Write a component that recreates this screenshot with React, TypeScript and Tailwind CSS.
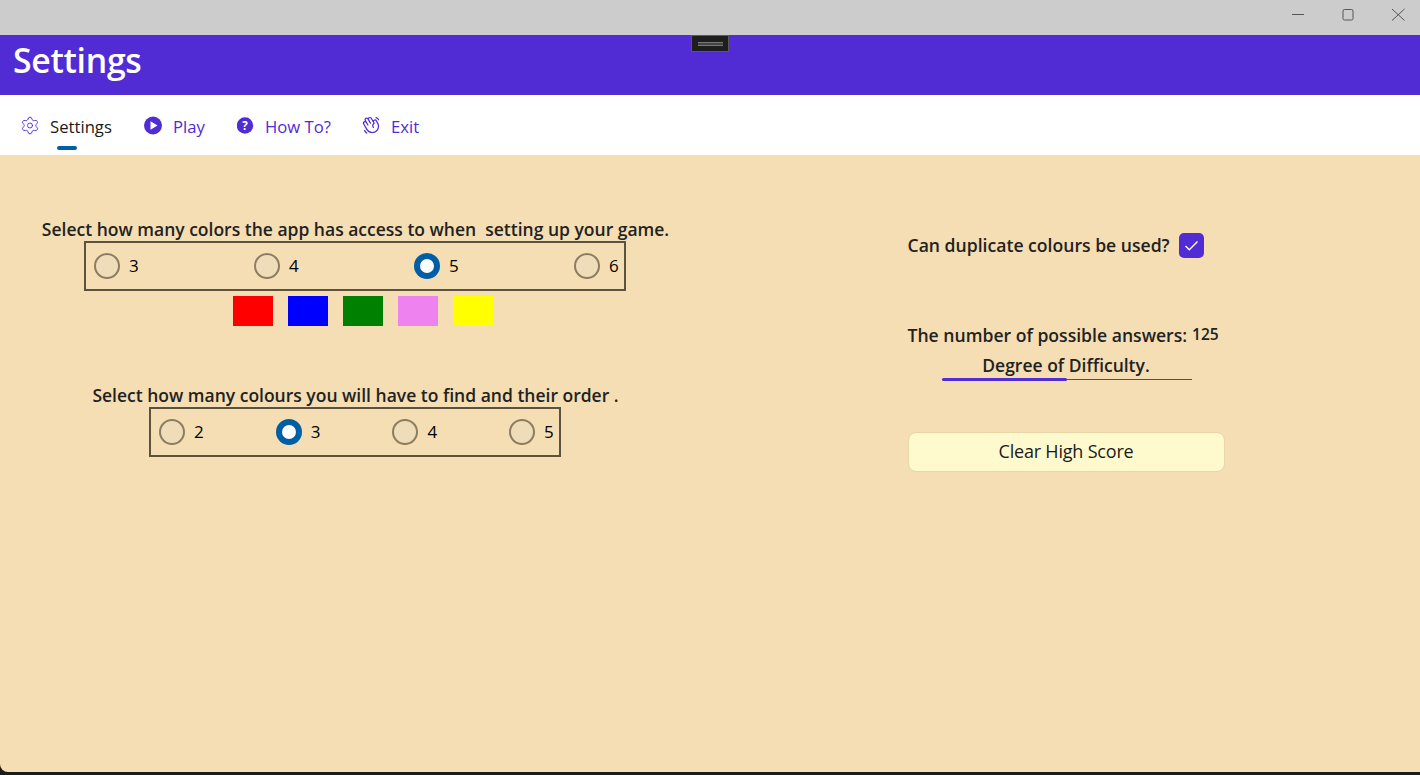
import { JSX } from 'react'
import { Settings } from 'lucide-react'
import { PiHandWaving } from 'react-icons/pi'

const font = "font-['Open_Sans',sans-serif]"

const Radio = ({ label, checked, className }: { label: string; checked?: boolean; className: string }): JSX.Element => (
  <div className={`flex items-center gap-[9px] ${className}`}>
    {checked ? (
      <span className="flex size-[26px] items-center justify-center rounded-full bg-[#005ea6]">
        <span className="size-[14px] rounded-full bg-white" />
      </span>
    ) : (
      <span className="size-[26px] rounded-full border-2 border-[#8b7d62] bg-[#efdcb8]" />
    )}
    <span className="text-[17px] leading-none text-black">{label}</span>
  </div>
)

const Heading = ({ children }: { children: string }): JSX.Element => (
  <p className="whitespace-pre pl-[1px] text-center text-[17.5px] font-semibold leading-[24px] text-[#222222]">{children}</p>
)

const NavItem = ({ icon, label, active, className }: { icon: JSX.Element; label: string; active?: boolean; className: string }): JSX.Element => (
  <div className={`relative flex h-[24px] items-center ${className}`}>
    <span className="flex size-[20px] items-center justify-center">{icon}</span>
    <span className={`ml-[10px] pt-[4px] text-[16.7px] leading-[20px] ${active ? 'text-[#1a1a1a]' : 'text-[#512bd4]'}`}>{label}</span>
    {active && <span className="absolute left-[37px] top-[33px] h-[4px] w-[20px] rounded-full bg-[#005ea6]" />}
  </div>
)

export default function App(): JSX.Element {
  return (
    <div className={`relative flex h-[775px] w-[1420px] flex-col overflow-hidden bg-[#1c1c1c] ${font}`}>
      <div className="flex h-[35px] shrink-0 justify-end bg-[#cccccc]">
        <div className="flex h-[29px] items-center">
          <svg width="140" height="29" viewBox="0 0 140 29" fill="none" stroke="#555555" strokeWidth="1">
            <path d="M12 14.5h12" />
            <rect x="63" y="9.5" width="10" height="10.5" rx="1.5" />
            <path d="M112 9l12.5 11.5M124.5 9L112 20.5" />
          </svg>
        </div>
      </div>

      <div className="flex h-[60px] shrink-0 items-center bg-[#512bd4] pl-[13px]">
        <h1 className="pb-[8px] text-[33.8px] font-semibold leading-none tracking-[-0.3px] text-white">Settings</h1>
      </div>

      <div className="absolute left-[691px] top-[35px] flex h-[17px] w-[38px] items-center justify-center border border-[#5a5a5a] bg-[#1e1e1e]">
        <span className="h-[4px] w-[25px] border-y border-[#777777] bg-[#444444]" />
      </div>

      <nav className="flex h-[60px] shrink-0 items-center bg-white pl-[20px]">
        <NavItem className="w-[123px]" active label="Settings" icon={<Settings size={21} strokeWidth={1.1} color="#512bd4" />} />
        <NavItem
          className="w-[92px]"
          label="Play"
          icon={
            <svg width="19" height="19" viewBox="0 0 19 19">
              <circle cx="9" cy="9.5" r="9" fill="#512bd4" />
              <path d="M6.5 5.2l7 4.3-7 4.3z" fill="white" />
            </svg>
          }
        />
        <NavItem
          className="w-[126px]"
          label="How To?"
          icon={
            <svg width="17" height="17" viewBox="0 0 17 17">
              <circle cx="8" cy="8.5" r="8.2" fill="#512bd4" />
              <text x="8" y="12.6" textAnchor="middle" fontSize="11.5" fontWeight="700" fill="white" fontFamily="Open Sans, sans-serif">?</text>
            </svg>
          }
        />
        <NavItem className="w-[70px]" label="Exit" icon={<PiHandWaving size={20} color="#512bd4" />} />
      </nav>

      <main className="mb-[3px] grid min-h-0 flex-1 grid-cols-2 rounded-bl-[8px] bg-[#f5deb3]">
        <section className="flex flex-col items-center pt-[62px]">
          <Heading>{'Select how many colors the app has access to when  setting up your game.'}</Heading>
          <div className="flex h-[50px] w-[542px] items-center border-2 border-[#5c5240] pb-[1px] pl-[8px]">
            <Radio label="3" className="w-[160px]" />
            <Radio label="4" className="w-[160px]" />
            <Radio label="5" checked className="w-[160px]" />
            <Radio label="6" className="w-[50px]" />
          </div>
          <div className="ml-[16px] mt-[5px] flex gap-[15px]">
            <span className="h-[30px] w-[40px] bg-[#ff0000]" />
            <span className="h-[30px] w-[40px] bg-[#0000ff]" />
            <span className="h-[30px] w-[40px] bg-[#008000]" />
            <span className="h-[30px] w-[40px] bg-[#ee82ee]" />
            <span className="h-[30px] w-[40px] bg-[#ffff00]" />
          </div>
          <div className="mt-[57px]">
            <Heading>Select how many colours you will have to find and their order .</Heading>
          </div>
          <div className="flex h-[50px] w-[412px] items-center border-2 border-[#5c5240] pb-[1px] pl-[8px]">
            <Radio label="2" className="w-[117px]" />
            <Radio label="3" checked className="w-[117px]" />
            <Radio label="4" className="w-[117px]" />
            <Radio label="5" className="w-[50px]" />
          </div>
        </section>

        <section className="flex flex-col items-center pl-[2px] pt-[78px]">
          <div className="flex w-[317px] flex-col">
            <div className="flex h-[25px] items-center gap-[9px]">
              <span className="whitespace-nowrap text-[17.6px] font-semibold text-[#222222]">Can duplicate colours be used?</span>
              <span className="flex size-[25px] items-center justify-center rounded-[5px] bg-[#512bd4]">
                <svg width="15" height="15" viewBox="0 0 15 15" fill="none" stroke="white" strokeWidth="1.4">
                  <path d="M1.5 8l3.8 3.8L13.5 3.5" />
                </svg>
              </span>
            </div>
            <div className="mt-[65px] flex h-[24px] items-center gap-[5px]">
              <span className="whitespace-nowrap text-[17.6px] font-semibold text-[#222222]">The number of possible answers:</span>
              <span className="text-[15.5px] font-semibold leading-none text-[#222222]">125</span>
            </div>
            <p className="mt-[6px] text-center text-[17.5px] font-semibold leading-[24px] text-[#222222]">Degree of Difficulty.</p>
            <div className="relative ml-[34px] mt-[2px] h-[1px] w-[250px] bg-[#5c5240]">
              <span className="absolute left-0 top-[-1px] h-[3px] w-[125px] rounded-full bg-[#512bd4]" />
            </div>
            <button
              type="button"
              className="mt-[52px] h-[40px] w-[317px] rounded-[8px] border border-[#e8d5a8] bg-[#fffacd] pb-[2px] text-[18px] tracking-[-0.2px] text-[#1a1a1a]"
            >
              Clear High Score
            </button>
          </div>
        </section>
      </main>
    </div>
  )
}
